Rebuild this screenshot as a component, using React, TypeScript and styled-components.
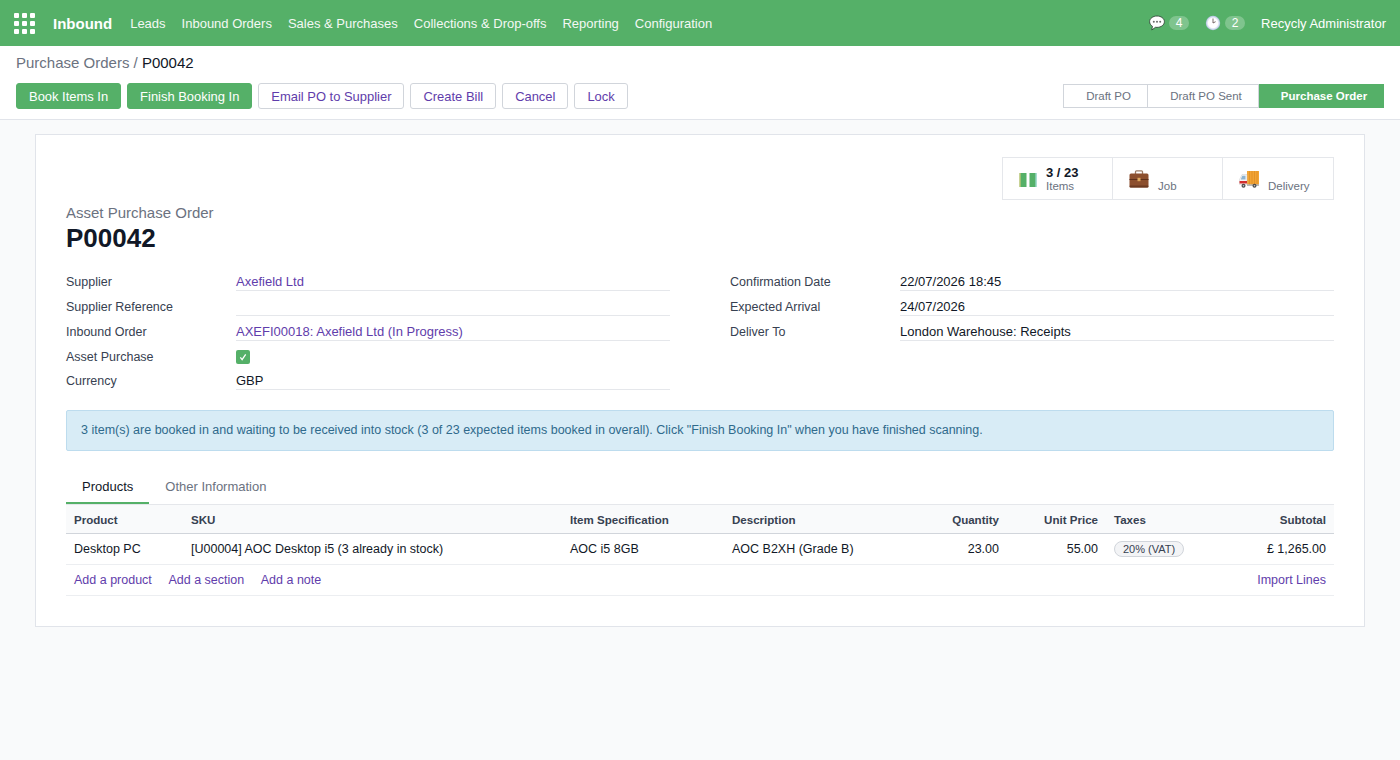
import React from "react";
import styled, { createGlobalStyle } from "styled-components";

const Global = createGlobalStyle`
  html, body { margin: 0; padding: 0; height: 100%; }
  body { background: #f9fafb; font-family: "Liberation Sans", Arial, sans-serif; font-size: 12.5px; color: #111827; }
  * { box-sizing: border-box; }
`;

const Nav = styled.header`
  height: 46px; background: #55b068; color: #fff; display: flex; align-items: center; padding: 0 14px; font-size: 13px;
`;
const Apps = styled.div`
  display: grid; grid-template-columns: repeat(3, 5px); grid-auto-rows: 5px; gap: 3px; margin-right: 18px;
  & > i { background: #fff; border-radius: 1px; display: block; }
`;
const Brand = styled.span`font-size: 15px; font-weight: 700; margin-right: 18px;`;
const Menu = styled.nav`display: flex; gap: 16px; flex: 1; color: #f3f8f4;`;
const Systray = styled.div`display: flex; align-items: center;`;
const Count = styled.span`
  background: rgba(255,255,255,.25); border-radius: 8px; height: 14px; min-width: 20px; font-size: 12px; line-height: 14px; text-align: center; margin-left: 4px; margin-right: 16px;
`;

const ControlPanel = styled.div`
  height: 74px; background: #fff; border-bottom: 1px solid #e1e4ea; padding: 8px 16px 0;
`;
const Crumbs = styled.div`font-size: 15px; line-height: 18px; color: #6b7280; margin-bottom: 11px;`;
const Current = styled.span`color: #111827;`;
const ActionRow = styled.div`display: flex; align-items: center;`;
const Actions = styled.div`display: flex; gap: 6px; flex: 1;`;
const Btn = styled.button<{ $primary?: boolean }>`
  font-family: inherit; font-size: 12.95px; height: 26px; padding: 0 12px; border-radius: 3px; cursor: pointer;
  border: 1px solid ${p => (p.$primary ? "#55b068" : "#d1d5db")};
  background: ${p => (p.$primary ? "#55b068" : "#fff")};
  color: ${p => (p.$primary ? "#fff" : "#5f3dab")};
`;
const Status = styled.div`display: flex; height: 24px; font-size: 11.5px;`;
const Step = styled.div<{ $w: number; $active?: boolean }>`
  width: ${p => p.$w}px; display: flex; align-items: center; justify-content: center; padding-left: 6px;
  border: 1px solid ${p => (p.$active ? "#55b068" : "#d1d5db")}; border-left-width: ${p => (p.$active ? 0 : 1)}px;
  background: ${p => (p.$active ? "#55b068" : "#fff")};
  color: ${p => (p.$active ? "#fff" : "#6b7280")};
  font-weight: ${p => (p.$active ? 700 : 400)};
  & + & { border-left-width: 0; }
`;

const Sheet = styled.main`
  margin: 14px 35px 0; width: 1330px; height: 493px; background: #fff; border: 1px solid #e1e4ea; padding: 22px 30px 0;
`;
const Stats = styled.div`display: flex; justify-content: flex-end; height: 43px;`;
const Stat = styled.div<{ $w: number }>`
  width: ${p => p.$w}px; height: 43px; border: 1px solid #e5e7eb; display: flex; align-items: center; padding-left: 16px; gap: 9px;
  & + & { border-left: 0; }
`;
const StatText = styled.div`display: flex; flex-direction: column; font-size: 11.5px; color: #6b7280; line-height: 13px; justify-content: flex-end; height: 28px;`;
const StatValue = styled.strong`color: #111827; font-size: 13px; line-height: 15px;`;

const Kicker = styled.div`font-size: 15px; color: #6b7280; line-height: 18px; margin-top: 4px;`;
const Title = styled.h1`font-size: 26px; line-height: 32px; margin: 0 0 17px; font-weight: 700; color: #111827;`;
const Cols = styled.div`display: grid; grid-template-columns: 604px 604px; column-gap: 60px;`;
const Field = styled.div<{ $h?: number }>`display: grid; grid-template-columns: 170px 1fr; height: ${p => p.$h ?? 25}px; align-items: start;`;
const Label = styled.div`color: #374151; line-height: 18px; padding-top: 2px;`;
const Value = styled.div`
  font-size: 13px; line-height: 18px; padding-top: 2px; height: 20px; border-bottom: 1px solid #e5e7eb;
`;
const A = styled.a`color: #5f3dab; text-decoration: none;`;
const Check = styled.span`
  width: 14px; height: 14px; background: #55b068; border-radius: 2px; display: flex; align-items: center; justify-content: center; margin-top: 4px;
`;
const Alert = styled.div`
  margin-top: 15px; height: 41px; background: #d8ecf6; border: 1px solid #bddcee; border-radius: 2px; color: #2f6a8c; padding: 0 14px 1px; display: flex; align-items: center;
`;
const Tabs = styled.div`display: flex; margin-top: 19px; height: 35px; border-bottom: 1px solid #e5e7eb;`;
const Tab = styled.div<{ $active?: boolean }>`
  height: 34px; padding: 0 16px; line-height: 34px; font-size: 13px; color: ${p => (p.$active ? "#111827" : "#6b7280")};
  border-bottom: 2px solid ${p => (p.$active ? "#55b068" : "transparent")};
`;
const cols = "117px 379px 162px 192px 91px 99px 107px 1fr";
const Row = styled.div<{ $h: number }>`
  display: grid; grid-template-columns: ${cols}; height: ${p => p.$h}px; align-items: center;
`;
const Head = styled(Row)`background: #f9fafb; font-size: 11.55px; font-weight: 700; color: #374151; border-bottom: 1px solid #d1d5db; padding-top: 1px;`;
const Body = styled(Row)`border-bottom: 1px solid #eceef1;`;
const Cell = styled.div<{ $r?: boolean }>`padding: 0 8px; text-align: ${p => (p.$r ? "right" : "left")}; white-space: nowrap;`;
const Pill = styled.span`
  display: inline-block; font-size: 11px; line-height: 14px; padding: 0 8px; border-radius: 8px; border: 1px solid #d1d5db; background: #f3f4f6; color: #374151;
`;
const AddRow = styled.div`
  display: flex; height: 31px; align-items: center; padding: 0 8px; gap: 16.6px; border-bottom: 1px solid #eceef1;
`;
const Push = styled(A)`margin-left: auto;`;

const Bubble = () => (
  <svg width="16" height="16" viewBox="0 0 16 16">
    <path d="M8 1C3.900 1 .6 3.500 .6 6.700c0 1.900 1.100 3.500 2.800 4.500L2.800 15l3.700-2.700c.5.100 1 .1 1.500.1 4.100 0 7.400-2.500 7.400-5.700S12.100 1 8 1z" fill="#fff" stroke="#33483a" strokeWidth=".9" />
    <circle cx="4.800" cy="6.700" r="1" fill="#6b6b6b" /><circle cx="8" cy="6.700" r="1" fill="#6b6b6b" /><circle cx="11.200" cy="6.700" r="1" fill="#6b6b6b" />
  </svg>
);
const Clock = () => (
  <svg width="16" height="16" viewBox="0 0 16 16">
    <defs>
      <radialGradient id="face" cx=".5" cy=".5" r=".5">
        <stop offset=".65" stopColor="#ffffff" /><stop offset="1" stopColor="#aebfe0" />
      </radialGradient>
    </defs>
    <circle cx="8" cy="8" r="7.200" fill="url(#face)" />
    <path d="M8 3.500V8l2.600-1.300" fill="none" stroke="#6a5a5a" strokeWidth=".9" />
  </svg>
);
const BarsIcon = () => (
  <svg width="18" height="16" viewBox="0 0 18 16">
    <rect x="0.500" y="2" width="7" height="14" fill="#55b068" /><rect x="10.500" y="2" width="7" height="14" fill="#55b068" />
    <rect x="0.500" y="2" width="1" height="14" fill="#e7cf7a" /><rect x="16.500" y="2" width="1" height="14" fill="#aee3ee" />
  </svg>
);
const Case = () => (
  <svg width="20" height="18" viewBox="0 0 20 18">
    <path d="M6.500 4V1.800Q6.500 .8 7.500 .8h5q1 0 1 1V4" fill="none" stroke="#9a7a65" strokeWidth="1.300" />
    <rect x=".5" y="3.500" width="19" height="14" rx="1.500" fill="#8c4f2e" />
    <rect x=".5" y="9" width="19" height="1" fill="#5c2f1a" />
    <rect x=".5" y="15.500" width="19" height="2" rx="1" fill="#6c3a21" />
    <rect x="8.500" y="7.800" width="3" height="3.400" fill="#dca55c" />
  </svg>
);
const Truck = () => (
  <svg width="20" height="18" viewBox="0 0 20 18">
    <rect x="8" y="1" width="12" height="13.500" fill="#f2a435" />
    <path d="M10.500 1v13.500M13 1v13.500M15.500 1v13.500M18 1v13.500" stroke="#dd8c22" strokeWidth=".7" />
    <path d="M.5 14.500V9.500L3 4.500h5v10z" fill="#f4f4f4" stroke="#c4c4c4" strokeWidth=".4" />
    <path d="M3.300 5.800H6.500V9.500H1.800z" fill="#8fb4d0" />
    <rect x=".5" y="11" width="7.500" height="2.500" fill="#d32f2f" />
    <rect x="8" y="14.500" width="12" height="1.200" fill="#9a9a9a" />
    <circle cx="4.500" cy="15.700" r="2" fill="#4a4a4a" /><circle cx="15.500" cy="15.700" r="2" fill="#4a4a4a" />
    <circle cx="4.500" cy="15.700" r=".8" fill="#ccc" /><circle cx="15.500" cy="15.700" r=".8" fill="#ccc" />
  </svg>
);

export default function App() {
  return (
    <>
      <Global />
      <Nav>
        <Apps>{Array.from({ length: 9 }).map((_, i) => <i key={i} />)}</Apps>
        <Brand>Inbound</Brand>
        <Menu>
          <span>Leads</span><span>Inbound Orders</span><span>Sales &amp; Purchases</span>
          <span>Collections &amp; Drop-offs</span><span>Reporting</span><span>Configuration</span>
        </Menu>
        <Systray>
          <Bubble /><Count>4</Count><Clock /><Count>2</Count><span>Recycly Administrator</span>
        </Systray>
      </Nav>
      <ControlPanel>
        <Crumbs>Purchase Orders / <Current>P00042</Current></Crumbs>
        <ActionRow>
          <Actions>
            <Btn $primary>Book Items In</Btn><Btn $primary>Finish Booking In</Btn>
            <Btn>Email PO to Supplier</Btn><Btn>Create Bill</Btn><Btn>Cancel</Btn><Btn>Lock</Btn>
          </Actions>
          <Status>
            <Step $w={85}>Draft PO</Step><Step $w={111}>Draft PO Sent</Step><Step $w={125} $active>Purchase Order</Step>
          </Status>
        </ActionRow>
      </ControlPanel>
      <Sheet>
        <Stats>
          <Stat $w={111}><BarsIcon /><StatText><StatValue>3 / 23</StatValue>Items</StatText></Stat>
          <Stat $w={110}><Case /><StatText>Job</StatText></Stat>
          <Stat $w={111}><Truck /><StatText>Delivery</StatText></Stat>
        </Stats>
        <Kicker>Asset Purchase Order</Kicker>
        <Title>P00042</Title>
        <Cols>
          <div>
            <Field><Label>Supplier</Label><Value><A>Axefield Ltd</A></Value></Field>
            <Field><Label>Supplier Reference</Label><Value /></Field>
            <Field><Label>Inbound Order</Label><Value><A>AXEFI00018: Axefield Ltd (In Progress)</A></Value></Field>
            <Field $h={24}><Label>Asset Purchase</Label><Check><svg width="8" height="8" viewBox="0 0 9 9"><path d="M1.500 5l2 2.500L7.500 1.500" fill="none" stroke="#fff" strokeWidth="1.400" /></svg></Check></Field>
            <Field><Label>Currency</Label><Value>GBP</Value></Field>
          </div>
          <div>
            <Field><Label>Confirmation Date</Label><Value>22/07/2026 18:45</Value></Field>
            <Field><Label>Expected Arrival</Label><Value>24/07/2026</Value></Field>
            <Field><Label>Deliver To</Label><Value>London Warehouse: Receipts</Value></Field>
          </div>
        </Cols>
        <Alert>3 item(s) are booked in and waiting to be received into stock (3 of 23 expected items booked in overall). Click "Finish Booking In" when you have finished scanning.</Alert>
        <Tabs><Tab $active>Products</Tab><Tab>Other Information</Tab></Tabs>
        <Head $h={29}>
          <Cell>Product</Cell><Cell>SKU</Cell><Cell>Item Specification</Cell><Cell>Description</Cell>
          <Cell $r>Quantity</Cell><Cell $r>Unit Price</Cell><Cell>Taxes</Cell><Cell $r>Subtotal</Cell>
        </Head>
        <Body $h={31}>
          <Cell>Desktop PC</Cell><Cell>[U00004] AOC Desktop i5 (3 already in stock)</Cell><Cell>AOC i5 8GB</Cell><Cell>AOC B2XH (Grade B)</Cell>
          <Cell $r>23.00</Cell><Cell $r>55.00</Cell><Cell><Pill>20% (VAT)</Pill></Cell><Cell $r>£ 1,265.00</Cell>
        </Body>
        <AddRow><A>Add a product</A><A>Add a section</A><A>Add a note</A><Push>Import Lines</Push></AddRow>
      </Sheet>
    </>
  );
}
